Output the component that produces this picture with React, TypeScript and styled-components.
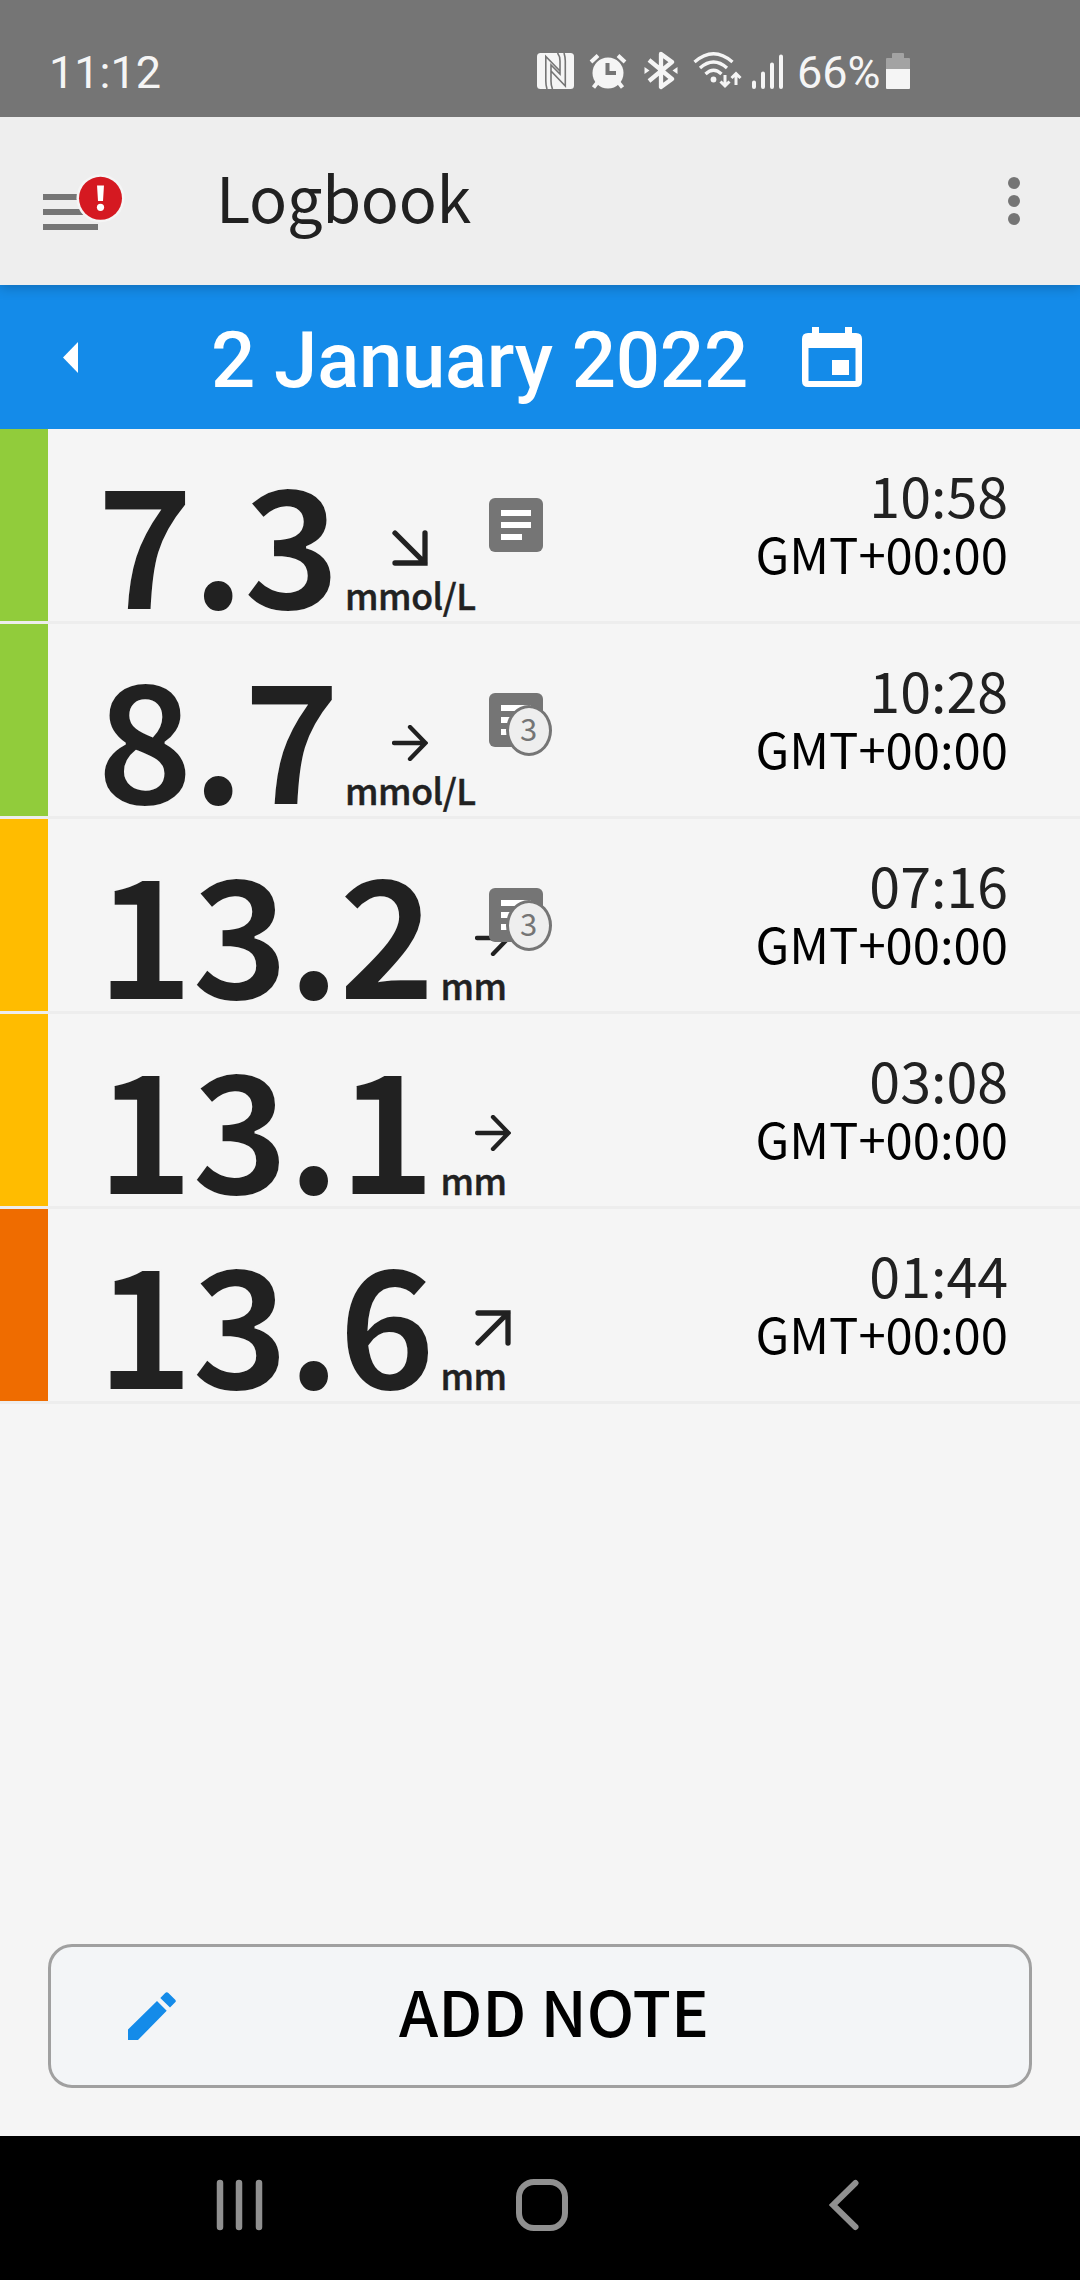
import React from "react";
import styled, { createGlobalStyle } from "styled-components";

const humanist = `"Noto Sans CJK SC", "Noto Sans", sans-serif`;
const roboto = `Roboto, "Liberation Sans", sans-serif`;

const GlobalStyle = createGlobalStyle`
  *, *::before, *::after { box-sizing: border-box; }
  body { margin: 0; background: #f5f5f5; }
`;

const Screen = styled.div`
  width: 1080px;
  height: 2280px;
  display: flex;
  flex-direction: column;
  overflow: hidden;
  background: #f5f5f5;
  color: #212121;
  font-family: ${humanist};
  svg { display: block; flex: none; }
`;

const StatusBar = styled.header`
  position: relative;
  z-index: 2;
  height: 117px;
  flex: none;
  display: flex;
  align-items: flex-start;
  padding: 45px 170px 0 49px;
  background: #757575;
  color: #f5f5f5;
  font: 400 45px/56px ${roboto};
`;

const Clock = styled.time`
  flex: 1;
`;

const StatusIcons = styled.div`
  display: flex;
`;

const Slot = styled.span<{ $left: number; $top: number }>`
  padding: ${(p) => p.$top}px 0 0 ${(p) => p.$left}px;
`;

const Battery = styled.span`
  width: 82px;
  margin: 0 7px 0 14px;
  white-space: nowrap;
`;

const Toolbar = styled.div`
  position: relative;
  z-index: 1;
  height: 168px;
  flex: none;
  display: flex;
  align-items: center;
  padding: 0 58px 0 42px;
  background: #eeeeee;
  box-shadow: 0 2px 12px rgba(0, 0, 0, 0.24);
`;

const Title = styled.h1`
  flex: 1;
  margin: 0 0 11px 90px;
  font-size: 63px;
  font-weight: 400;
  line-height: 92px;
  letter-spacing: -0.3px;
`;

const DateBar = styled.div`
  height: 144px;
  flex: none;
  display: flex;
  align-items: center;
  padding-left: 63px;
  background: #148be9;
  color: #fff;
`;

const DateLabel = styled.h2`
  width: 538px;
  margin: 8px 53px 0 133px;
  font: 500 78px/92px ${roboto};
  letter-spacing: -0.3px;
  white-space: nowrap;
`;

const List = styled.main`
  flex: 1;
`;

const Entry = styled.article`
  height: 195px;
  display: flex;
  border-bottom: 3px solid #ededed;
`;

const RangeBar = styled.div<{ $color: string }>`
  width: 48px;
  background: ${(p) => p.$color};
`;

const Reading = styled.div`
  position: relative;
  flex: 1;
  display: flex;
  align-items: flex-start;
  padding-left: 48px;
`;

const Value = styled.span`
  margin-top: -11px;
  font-size: 166px;
  line-height: 240px;
  font-weight: 700;
  letter-spacing: -2.6px;
  -webkit-text-stroke: 1.8px #f5f5f5;
`;

const Trend = styled.div<{ $narrow: boolean }>`
  width: ${(p) => (p.$narrow ? 70 : 140)}px;
  margin: 101px 0 0 7px;
  display: flex;
  flex-direction: column;
  svg { margin-left: ${(p) => (p.$narrow ? 35 : 47)}px; }
`;

const Unit = styled.span`
  margin-top: 3px;
  font-size: 35.5px;
  line-height: 52px;
  font-weight: 500;
  letter-spacing: -0.4px;
  -webkit-text-stroke: 0.5px #212121;
`;

const NoteMark = styled.div`
  position: absolute;
  left: 441px;
  top: 69px;
  width: 64px;
  height: 64px;
`;

const NoteCount = styled.span`
  position: absolute;
  left: 17px;
  top: 12px;
  width: 46px;
  height: 51px;
  padding-right: 1px;
  border: 3px solid #757575;
  border-radius: 50%;
  background: #eeeeee;
  color: #757575;
  font-size: 31px;
  line-height: 39px;
  text-align: center;
`;

const When = styled.div`
  padding: 35px 72px 0 0;
  text-align: right;
`;

const Time = styled.div`
  font-size: 55.5px;
  line-height: 60px;
`;

const Zone = styled.div`
  color: #000;
  font-size: 49px;
  line-height: 58px;
`;

const AddNote = styled.button`
  height: 144px;
  flex: none;
  margin: 0 48px 48px;
  padding: 0 0 0 77px;
  display: flex;
  align-items: center;
  border: 3px solid #a0a0a0;
  border-radius: 24px;
  background: #f3f5f7;
  color: #000;
  font: 500 63px/92px ${humanist};
`;

const AddLabel = styled.span`
  margin: 0 0 12px 223px;
`;

const NavBar = styled.nav`
  height: 144px;
  flex: none;
  display: flex;
  align-items: center;
  padding: 0 0 6px 215px;
  background: #000;
`;

const HomeSlot = styled.span`
  margin: 0 261px 0 253px;
`;

const NfcIcon = () => (
  <svg width="37" height="36" viewBox="0 0 37 36">
    <rect width="37" height="36" rx="3.5" fill="#f5f5f5" />
    <path d="M10 36Q8.800 32 8.800 28V3.500L23 18V8Q23 3 20.500 0M27 0Q28.300 4 28.300 8V33L14 18V28Q14 33 15.500 36M14 19V12L23 21V17" fill="none" stroke="#757575" strokeWidth="1.6" />
  </svg>
);

const AlarmIcon = () => (
  <svg width="38" height="37" viewBox="0 0 38 37">
    <circle cx="19" cy="20" r="15.500" fill="#f5f5f5" />
    <path d="M2 9 9 2.500M29 2.500 36 9M8 30 4.500 34.500M30 30 33.500 34.500" stroke="#f5f5f5" strokeWidth="4" />
    <path d="M18.500 10V20H27" fill="none" stroke="#757575" strokeWidth="4" />
  </svg>
);

const BluetoothIcon = () => (
  <svg width="34" height="39" viewBox="0 0 34 39">
    <path d="M5 9 28 28 17 36V3L28 11 5 30" fill="none" stroke="#f5f5f5" strokeWidth="4.300" strokeLinejoin="round" />
    <path d="M0.500 16 5.500 19.500 0.500 23ZM33.500 16 28.500 19.500 33.500 23Z" fill="#f5f5f5" />
  </svg>
);

const WifiIcon = () => (
  <svg width="49" height="37" viewBox="0 0 49 37">
    <g fill="none" stroke="#f5f5f5" strokeWidth="3.300">
      <path d="M1.500 10Q20.500-6.500 39.500 10M7 16Q20.500 4 34 16M12.500 22Q20.500 14.500 28.500 22" />
      <path d="M32 23V34M27.500 29.500 32 34 36.500 29.500M43 33V21.500M38.500 26 43 21.500 47.500 26" strokeWidth="3" />
    </g>
    <circle cx="20.500" cy="27.500" r="2.900" fill="#f5f5f5" />
  </svg>
);

const SignalIcon = () => (
  <svg width="31" height="35" viewBox="0 0 31 35">
    <path d="M2 28.500V33M11 19.500V33M20 10.500V33M29 2.500V33" stroke="#f5f5f5" strokeWidth="4" strokeLinecap="round" />
  </svg>
);

const BatteryIcon = () => (
  <svg width="24" height="36" viewBox="0 0 24 36">
    <path d="M6 5V1Q6 0 7 0H17Q18 0 18 1V5H23Q24 5 24 6V16H0V6Q0 5 1 5Z" fill="#a3a3a3" />
    <path d="M0 16H24V35Q24 36 23 36H1Q0 36 0 35Z" fill="#f5f5f5" />
  </svg>
);

const MenuIcon = () => (
  <svg width="84" height="60" viewBox="0 0 84 60">
    <path d="M1 26H56M1 41H56M1 56H56" stroke="#757575" strokeWidth="6" />
    <circle cx="58.500" cy="27.300" r="24" fill="#f5f5f5" />
    <circle cx="58.500" cy="27.300" r="21.500" fill="#d51921" />
    <path d="M55 14.500H62L61 30H56Z" fill="#fff" />
    <circle cx="58.500" cy="36.300" r="3.600" fill="#fff" />
  </svg>
);

const MoreIcon = () => (
  <svg width="16" height="48" viewBox="0 0 16 48">
    <g fill="#757575">
      <circle cx="8" cy="6" r="6" />
      <circle cx="8" cy="24" r="6" />
      <circle cx="8" cy="42" r="6" />
    </g>
  </svg>
);

const CalendarIcon = () => (
  <svg width="60" height="60" viewBox="0 0 60 60">
    <path fill="#fff" fillRule="evenodd" d="M10 0H17V6H43V0H50V6H54Q60 6 60 12V54Q60 60 54 60H6Q0 60 0 54V12Q0 6 6 6H10ZM6.500 21V54H53.500V21Z" />
    <path d="M30 33H47V48H30Z" fill="#fff" />
  </svg>
);

const arrows = {
  flat: "M2 18H33.500M18 2 33.500 18 18 34",
  down: "M3 3 33 33M33 3V33H3",
  up: "M3 33 33 3M3 3H33V33",
};

const Arrow = ({ kind }: { kind: keyof typeof arrows }) => (
  <svg width="36" height="36" viewBox="0 0 36 36">
    <path d={arrows[kind]} fill="none" stroke="#212121" strokeWidth={kind === "flat" ? 4.300 : 5.300} strokeLinecap="round" />
  </svg>
);

const NoteIcon = () => (
  <svg width="54" height="54" viewBox="0 0 54 54">
    <rect width="54" height="54" rx="6" fill="#757575" />
    <path d="M12 15H42M12 27H42M12 39H33" stroke="#fff" strokeWidth="6" />
  </svg>
);

const PencilIcon = () => (
  <svg width="48" height="48" viewBox="0 0 48 48">
    <path fill="#148be9" d="M0 37.500V48H10L38.700 18.700 29 9ZM32.300 6 37.200 1Q38.800-.3 40.400 1L47.200 7.700Q48.500 9 47.200 10.300L42 15.500Z" />
  </svg>
);

const entries: { value: string; color: string; unit: string; trend: keyof typeof arrows; notes: number; time: string }[] = [
  { value: "7.3", color: "#91cc3b", unit: "mmol/L", trend: "down", notes: 1, time: "10:58" },
  { value: "8.7", color: "#91cc3b", unit: "mmol/L", trend: "flat", notes: 3, time: "10:28" },
  { value: "13.2", color: "#ffbc00", unit: "mm", trend: "flat", notes: 3, time: "07:16" },
  { value: "13.1", color: "#ffbc00", unit: "mm", trend: "flat", notes: 0, time: "03:08" },
  { value: "13.6", color: "#ef6c00", unit: "mm", trend: "up", notes: 0, time: "01:44" },
];

export default function App() {
  return (
    <Screen>
      <GlobalStyle />
      <StatusBar>
        <Clock>11:12</Clock>
        <StatusIcons>
          <Slot $left={0} $top={8}><NfcIcon /></Slot>
          <Slot $left={15} $top={8}><AlarmIcon /></Slot>
          <Slot $left={17} $top={6}><BluetoothIcon /></Slot>
          <Slot $left={15} $top={7}><WifiIcon /></Slot>
          <Slot $left={10} $top={9}><SignalIcon /></Slot>
          <Battery>66%</Battery>
          <Slot $left={0} $top={8}><BatteryIcon /></Slot>
        </StatusIcons>
      </StatusBar>
      <Toolbar>
        <MenuIcon />
        <Title>Logbook</Title>
        <MoreIcon />
      </Toolbar>
      <DateBar>
        <svg width="15" height="31" viewBox="0 0 15 31"><path d="M15 0V31L0 15.500Z" fill="#fff" /></svg>
        <DateLabel>2 January 2022</DateLabel>
        <CalendarIcon />
      </DateBar>
      <List>
        {entries.map((e) => (
          <Entry key={e.time}>
            <RangeBar $color={e.color} />
            <Reading>
              <Value>{e.value}</Value>
              <Trend $narrow={e.unit === "mm"}>
                <Arrow kind={e.trend} />
                <Unit>{e.unit}</Unit>
              </Trend>
              {e.notes > 0 && (
                <NoteMark>
                  <NoteIcon />
                  {e.notes > 1 && <NoteCount>{e.notes}</NoteCount>}
                </NoteMark>
              )}
            </Reading>
            <When>
              <Time>{e.time}</Time>
              <Zone>GMT+00:00</Zone>
            </When>
          </Entry>
        ))}
      </List>
      <AddNote>
        <PencilIcon />
        <AddLabel>ADD NOTE</AddLabel>
      </AddNote>
      <NavBar>
        <svg width="48" height="52" viewBox="0 0 48 52"><path d="M5 4V48M24 4V48M44 4V48" stroke="#909090" strokeWidth="6.500" strokeLinecap="round" /></svg>
        <HomeSlot>
          <svg width="52" height="52" viewBox="0 0 52 52"><rect x="3" y="3" width="46" height="46" rx="15" fill="none" stroke="#909090" strokeWidth="6" /></svg>
        </HomeSlot>
        <svg width="31" height="52" viewBox="0 0 31 52"><path d="M26.500 4 4 26 26.500 48" fill="none" stroke="#909090" strokeWidth="6" strokeLinecap="round" /></svg>
      </NavBar>
    </Screen>
  );
}
